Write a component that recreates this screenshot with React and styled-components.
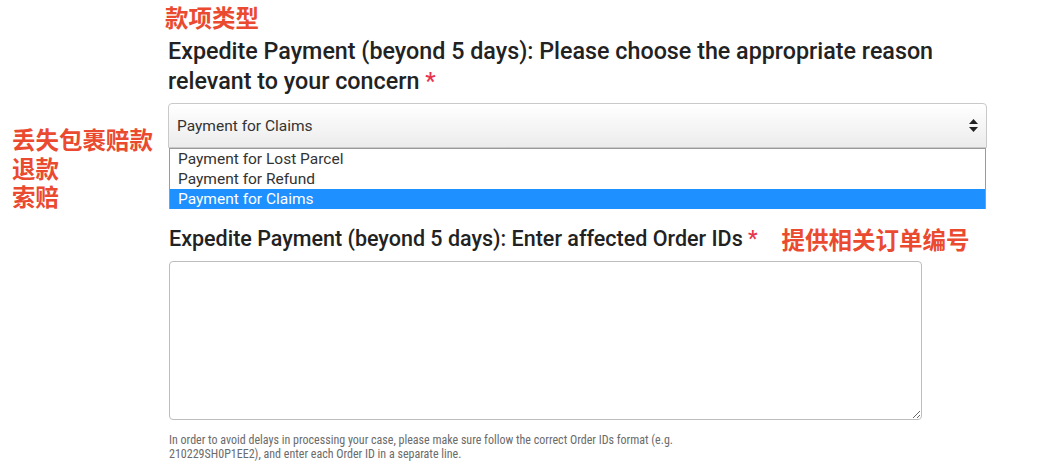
import React from 'react';
import styled, { createGlobalStyle } from 'styled-components';

const GlobalStyle = createGlobalStyle`
  html, body {
    margin: 0;
    padding: 0;
    background: #ffffff;
  }
  body {
    font-family: Roboto, "Liberation Sans", sans-serif;
  }
`;

const options = ['Payment for Lost Parcel', 'Payment for Refund', 'Payment for Claims'];

const App = () => (
  <>
    <GlobalStyle />
    <Page>
      <Side />
      <Main>
        <Note $shift={-3}>款项类型</Note>
        <Heading>
          Expedite Payment (beyond 5 days): Please choose the appropriate reason relevant to your concern <Star>*</Star>
        </Heading>
      </Main>

      <SideNotes>
        <Note>丢失包裹赔款</Note>
        <Note>退款</Note>
        <Note>索赔</Note>
      </SideNotes>
      <Main>
        <Select>
          Payment for Claims
          <Arrows width="9" height="13" viewBox="0 0 9 13">
            <path d="M4.5 0 L9 5 H0 Z" fill="#222" />
            <path d="M4.5 13 L9 8 H0 Z" fill="#222" />
          </Arrows>
        </Select>
        <List>
          {options.map((o, i) => (
            <Option key={o} $active={i === options.length - 1}>{o}</Option>
          ))}
        </List>
      </Main>

      <Side />
      <Main>
        <SubRow>
          <SubHeading>
            Expedite Payment (beyond 5 days): Enter affected Order IDs <Star>*</Star>
          </SubHeading>
          <Note>提供相关订单编号</Note>
        </SubRow>
        <TextArea />
        <Help>
          In order to avoid delays in processing your case, please make sure follow the correct Order IDs format (e.g.
          <br />
          210229SH0P1EE2), and enter each Order ID in a separate line.
        </Help>
      </Main>
    </Page>
  </>
);

const Page = styled.div`
  display: grid;
  grid-template-columns: 168px 820px;
  width: 1042px;
  height: 472px;
  box-sizing: border-box;
  padding-top: 3px;
  overflow: hidden;
  align-content: start;
`;

const Side = styled.div``;

const SideNotes = styled.div`
  display: flex;
  flex-direction: column;
  padding: 126px 0 0 12px;
  margin-top: -104px;

  & > div {
    line-height: 28.5px;
  }
`;

const Main = styled.div`
  display: flex;
  flex-direction: column;
  align-items: flex-start;
`;

const Note = styled.div`
  font-family: "Noto Sans CJK SC", sans-serif;
  font-weight: 700;
  font-size: 23.5px;
  line-height: 29px;
  color: #ea4a30;
  white-space: nowrap;
  margin-left: ${p => p.$shift || 0}px;
`;

const Heading = styled.h2`
  margin: 4px 0 0 0;
  font-weight: 500;
  font-size: 23.3px;
  line-height: 30px;
  color: #222;
  width: 790px;
  padding-bottom: 7px;
`;

const Star = styled.span`
  color: #e8344d;
`;

const Select = styled.div`
  box-sizing: border-box;
  width: 819px;
  height: 45px;
  border: 1px solid #c9c9c9;
  border-radius: 4px 4px 0 0;
  background: linear-gradient(#ffffff, #ececec);
  font-size: 15.5px;
  color: #333;
  display: flex;
  align-items: center;
  padding: 0 8px;
`;

const Arrows = styled.svg`
  margin-left: auto;
`;

const List = styled.div`
  box-sizing: border-box;
  width: 817px;
  margin-left: 1px;
  border: 1px solid #9a9a9a;
  border-bottom: none;
  display: flex;
  flex-direction: column;
  height: 61px;
  justify-content: flex-end;
`;

const Option = styled.div`
  font-size: 15.5px;
  line-height: 20px;
  padding: 0 8px;
  color: ${p => (p.$active ? '#fff' : '#333')};
  background: ${p => (p.$active ? '#1e90ff' : 'transparent')};
`;

const SubRow = styled.div`
  display: flex;
  align-items: center;
  gap: 24px;
  margin: 14px 0 0 1px;
`;

const SubHeading = styled.div`
  font-weight: 500;
  font-size: 21.5px;
  line-height: 28px;
  color: #222;
`;

const TextArea = styled.textarea`
  box-sizing: border-box;
  width: 753px;
  height: 159px;
  margin: 7px 0 0 1px;
  border: 1px solid #bdbdbd;
  border-radius: 4px;
  background: #fff;
  outline: none;
`;

const Help = styled.div`
  margin: 13px 0 0 1px;
  font-family: "Liberation Sans Narrow", "Roboto Condensed", "Liberation Sans", sans-serif;
  font-size: 12px;
  line-height: 14px;
  color: #6b6b6b;
`;

export default App;
